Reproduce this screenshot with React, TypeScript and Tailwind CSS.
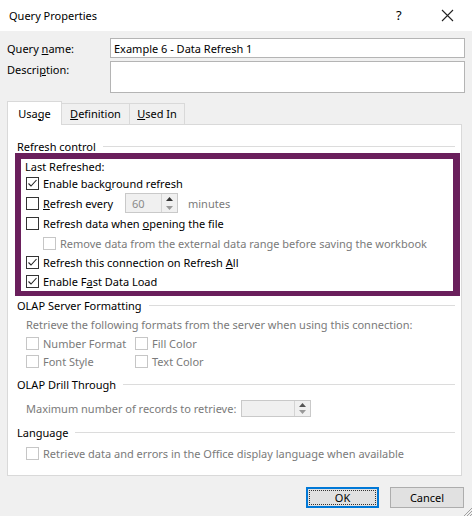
import React from "react";

const FONT = { fontFamily: '"Noto Sans", "Segoe UI", Arial, sans-serif' };

// small windows-ish checkbox
const CheckBox = ({ checked = false, disabled = false }: { checked?: boolean; disabled?: boolean }) => (
  <span
    className={`flex h-[13px] w-[13px] shrink-0 items-center justify-center border bg-white ${
      disabled ? "border-[#c6c6c6]" : "border-[#333333]"
    }`}
  >
    {checked && (
      <svg width="11" height="11" viewBox="0 0 11 11">
        <polyline points="1.5,5.5 4,8 9.5,2" fill="none" stroke="#222" strokeWidth="1.1" />
      </svg>
    )}
  </span>
);

const Spinner = ({ value, width, disabled }: { value: string; width: number; disabled?: boolean }) => (
  <div
    className="flex h-full border border-[#c9c9c9] bg-[#f0f0f0]"
    style={{ width }}
  >
    <div className="flex flex-1 items-center pl-[6px] text-[#8a8a8a]">{value}</div>
    <div className="flex w-[16px] flex-col border-l border-[#d4d4d4]">
      <div className="flex flex-1 items-center justify-center">
        <svg width="7" height="4" viewBox="0 0 7 4">
          <polygon points="0,4 7,4 3.5,0" fill={disabled ? "#555" : "#333"} />
        </svg>
      </div>
      <div className="flex flex-1 items-center justify-center">
        <svg width="7" height="4" viewBox="0 0 7 4">
          <polygon points="0,0 7,0 3.5,4" fill="#999" />
        </svg>
      </div>
    </div>
  </div>
);

const GroupHeader = ({ title }: { title: string }) => (
  <div className="flex h-full items-center pl-[9px] pr-[6px]">
    <span className="text-black">{title}</span>
    <span className="ml-[7px] h-px flex-1 bg-[#dcdcdc]" />
  </div>
);

const CheckRow = ({
  children,
  checked,
  disabled,
  h,
  indent = 0,
}: {
  children: React.ReactNode;
  checked?: boolean;
  disabled?: boolean;
  h: string;
  indent?: number;
}) => (
  <div className={`flex items-center ${h}`} style={{ paddingLeft: indent }}>
    <CheckBox checked={checked} disabled={disabled} />
    <span className={`ml-[4px] ${disabled ? "text-[#7a7a7a]" : "text-black"}`}>{children}</span>
  </div>
);

export default function App() {
  return (
    <div
      className="relative h-[516px] w-[472px] overflow-hidden whitespace-nowrap bg-[#f0f0f0] text-[11px] leading-none"
      style={FONT}
    >
      {/* title bar */}
      <div className="flex h-[31px] items-center bg-white pl-[9px]">
        <span className="flex-1 text-black">Query Properties</span>
        <span className="w-[45px] text-[13px] text-black">?</span>
        <svg width="13" height="13" viewBox="0 0 13 13" className="mr-[18px]">
          <path d="M1 1 L12 12 M12 1 L1 12" stroke="#222" strokeWidth="1.1" />
        </svg>
      </div>

      {/* name + description */}
      <div className="px-[7px] pt-[7px]">
        <div className="flex h-[20px] items-center">
          <span className="w-[103px]">
            Query <u>n</u>ame:
          </span>
          <div className="flex h-full flex-1 items-center border border-[#b4b4b4] bg-white pl-[3px]">
            Example 6 - Data Refresh 1
          </div>
        </div>
        <div className="mt-[3px] flex h-[32px]">
          <span className="w-[103px] pt-[3px]">
            Descri<u>p</u>tion:
          </span>
          <div className="h-full flex-1 border border-[#b4b4b4] bg-white" />
        </div>
      </div>

      {/* tabs */}
      <div className="mt-[8px] flex h-[23px] items-end pl-[7px]">
        <div className="relative z-10 -mb-px flex h-[24px] w-[55px] items-center justify-center border border-b-0 border-[#d9d9d9] bg-white pb-[1px]">
          Usa<u>g</u>e
        </div>
        <div className="flex h-[21px] w-[68px] items-center justify-center border border-l-0 border-b-0 border-[#d9d9d9] pb-[1px]">
          <u>D</u>efinition
        </div>
        <div className="flex h-[21px] w-[55px] items-center justify-center border border-l-0 border-b-0 border-[#d9d9d9] pb-[1px]">
          <u>U</u>sed In
        </div>
      </div>

      {/* tab panel */}
      <div className="ml-[7px] mr-[10px] h-[352px] border border-[#d9d9d9] bg-white">
        <div className="h-[14px]" />
        <div className="h-[14px]">
          <GroupHeader title="Refresh control" />
        </div>
        {/* highlighted region */}
        <div className="ml-[7px] mr-px h-[143px] border-[6px] border-b-[5px] border-r-[7px] border-[#6a1f5c] pl-[4px]">
          <div className="flex h-[15px] items-center">Last Refreshed:</div>
          <CheckRow h="h-[19px]" checked indent={1}>
            Enable back<u>g</u>round refresh
          </CheckRow>
          <div className="flex h-[20px] items-center pl-[1px]">
            <CheckBox />
            <span className="ml-[4px] w-[82px]">
              <u>R</u>efresh every
            </span>
            <div className="h-[20px]">
              <Spinner value="60" width={53} />
            </div>
            <span className="ml-[10px] text-[#7a7a7a]">minutes</span>
          </div>
          <CheckRow h="h-[21px]" indent={1}>
            Refresh data when <u>o</u>pening the file
          </CheckRow>
          <CheckRow h="h-[19px]" disabled indent={18}>
            Remove data from the external data range before saving the workbook
          </CheckRow>
          <CheckRow h="h-[19px]" checked indent={1}>
            Refresh this connection on Refresh <u>A</u>ll
          </CheckRow>
          <CheckRow h="h-[18px]" checked indent={1}>
            Enable F<u>a</u>st Data Load
          </CheckRow>
        </div>

        <div className="h-[19px]">
          <GroupHeader title="OLAP Server Formatting" />
        </div>
        <div className="flex h-[19px] items-center pl-[18px] text-[#7a7a7a]">
          Retrieve the following formats from the server when using this connection:
        </div>
        <div className="grid grid-cols-[109px_1fr] pl-[18px]">
          <CheckRow h="h-[18px]" disabled>
            Number Format
          </CheckRow>
          <CheckRow h="h-[18px]" disabled>
            Fill Color
          </CheckRow>
          <CheckRow h="h-[19px]" disabled>
            Font Style
          </CheckRow>
          <CheckRow h="h-[19px]" disabled>
            Text Color
          </CheckRow>
        </div>

        <div className="mt-[4px] h-[19px]">
          <GroupHeader title="OLAP Drill Through" />
        </div>
        <div className="mt-[6px] flex h-[17px] items-center pl-[18px]">
          <span className="w-[215px] text-[#7a7a7a]">Maximum number of records to retrieve:</span>
          <div className="h-[17px]">
            <Spinner value="" width={70} disabled />
          </div>
        </div>

        <div className="mt-[6px] h-[19px]">
          <GroupHeader title="Language" />
        </div>
        <div className="pl-[18px] pt-[1px]">
          <CheckRow h="h-[20px]" disabled>
            Retrieve data and errors in the Office display language when available
          </CheckRow>
        </div>
      </div>

      {/* buttons */}
      <div className="mt-[11px] flex justify-end gap-[11px] pr-[8px]">
        <button className="flex h-[21px] w-[73px] items-center justify-center border-2 border-[#0078d7] bg-[#e1e1e1] p-[1px]">
          <span className="flex h-full w-full items-center justify-center border border-dotted border-[#333]">OK</span>
        </button>
        <button className="flex h-[21px] w-[74px] items-center justify-center border border-[#adadad] bg-[#e1e1e1]">
          Cancel
        </button>
      </div>

      {/* resize grip */}
      <svg className="absolute bottom-0 right-0" width="9" height="9" viewBox="0 0 9 9">
        <path d="M9 1 L1 9 M9 4 L4 9 M9 7 L7 9" stroke="#a0a0a0" strokeWidth="1" />
      </svg>
    </div>
  );
}
